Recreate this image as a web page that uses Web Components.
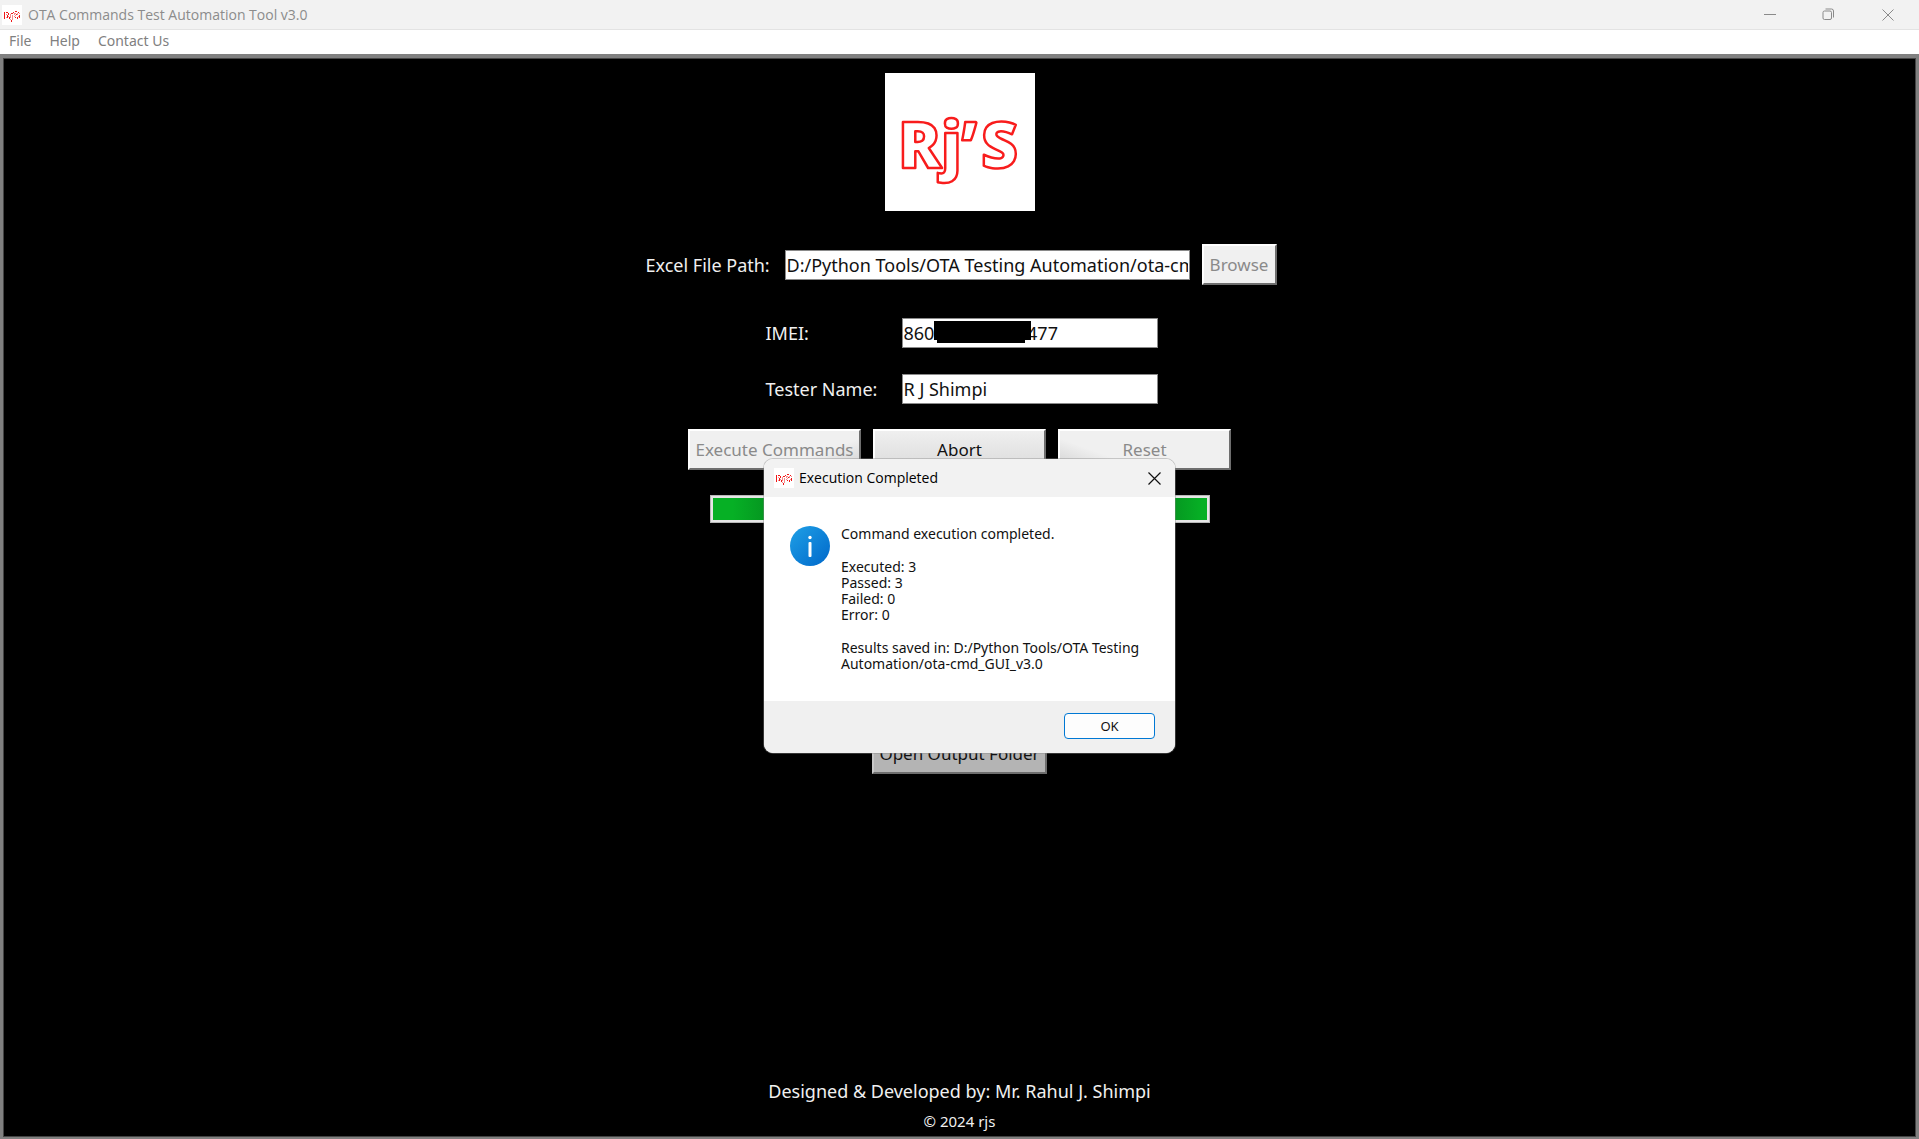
<!DOCTYPE html>
<html lang="en">
<head>
<meta charset="utf-8">
<title>OTA Commands Test Automation Tool v3.0</title>
<style>
html, body { height: 100%; margin: 0; }
body { font-family: "Noto Sans", "Open Sans", sans-serif; background: #000; overflow: hidden; }
</style>
</head>
<body>
<ota-app></ota-app>
<script>
const define = (name, html, init) => customElements.define(name, class extends HTMLElement {
  connectedCallback() {
    if (this.shadowRoot) return;
    const root = this.attachShadow({ mode: 'open' });
    root.innerHTML = html;
    if (init) init(this, root);
  }
});

define('rjs-icon', `
<style>:host{display:block;width:20px;height:20px;flex:none} svg{display:block}</style>
<svg width="20" height="20" viewBox="0 0 20 20" aria-hidden="true">
  <rect width="20" height="20" fill="#fff"/>
  <g fill="none" stroke-width="1" shape-rendering="crispEdges">
    <path stroke="#f01818" d="M2.500 7v7M4 7.500h2M6.500 8v2M5 10.500h1M5.500 11v2M7.500 12v2M9 8.500h2M9.500 15v2M11.500 7v1M13 6.500h2M14.500 9v1M16 7.500h1M15.500 12v2M17.500 10v3M13 12.500h1"/>
    <path stroke="#f78a8a" d="M4.500 9v1M4 12.500h1M6.500 11v1M8.500 9v4M8 14.500h1M10.500 10v5M12.500 8v2M13.500 8v1M15.500 8v2M16.500 11v1M13.500 10v1M17.500 8v1M12.500 11v1"/>
  </g>
</svg>`);

define('title-bar', `
<style>
:host{display:flex;align-items:center;height:29px;background:#f2f2f2;border-bottom:1px solid #e3e3e3;padding:0 2px;color:#8c8c8c;font:14px "Open Sans"}
span{flex:1;padding-left:6px;white-space:nowrap}
button{width:59px;height:29px;border:0;padding:0;background:none;color:#8a8a8a;display:grid;place-items:center}
svg{fill:none;stroke:currentColor}
</style>
<rjs-icon></rjs-icon><span><slot></slot></span>
<button aria-label="Minimize"><svg width="12" height="12"><path d="M0 5.500h12"/></svg></button>
<button aria-label="Restore"><svg width="13" height="13"><rect x="1" y="3" width="8.500" height="8.500" rx="1.500"/><path d="M3.500 1H9.500a2 2 0 0 1 2 2V9.500"/></svg></button>
<button aria-label="Close"><svg width="12" height="12"><path d="M.5.5l11 11M11.500.5l-11 11"/></svg></button>`);

define('menu-bar', `
<style>
:host{display:flex;align-items:flex-start;gap:18px;height:24px;padding-left:9px;background:#fff;font-size:14px;line-height:22px}
button{border:0;padding:0;background:none;font:inherit;color:#808080}
</style>
<button>File</button><button>Help</button><button>Contact Us</button>`);

define('rjs-logo', `
<style>:host{display:block;width:150px;height:138px;background:#fff} svg{display:block}
text{font:800 64px "Open Sans";fill:#fff;stroke:#f81c1c;stroke-width:2.500;stroke-linejoin:round}</style>
<svg width="150" height="138" viewBox="0 0 150 138" role="img">
  <text y="95"><tspan x="13">R</tspan><tspan x="56">j</tspan><tspan x="76">’</tspan><tspan x="96">S</tspan></text>
</svg>`);

define('tk-button', `
<style>
:host{display:block}
button{width:100%;height:41px;padding:0;border:2px solid;border-color:#fff #6e6e6e #6e6e6e #fff;outline:0;background:#f0f0f0;font:17px "Noto Sans";color:#111;white-space:nowrap}
button:disabled{color:#8a8a8a}
:host([shade=lower]) button{background:#b4b4b4;border-color:#a8a8a8 #6e6e6e #6e6e6e #c8c8c8}
:host([shade=left]) button{background:linear-gradient(160deg,#f0f0f0 70%,#d2d2d2)}
:host([shade=mid]) button{background:linear-gradient(#efefef,#dcdcdc)}
:host([shade=right]) button{background:linear-gradient(200deg,#f0f0f0 70%,#d2d2d2)}
</style>
<button><slot></slot></button>`, (el, root) => {
  root.querySelector('button').disabled = el.hasAttribute('disabled');
});

define('tk-field', `
<style>
:host{display:grid;align-items:center;color:#f0f0f0;font-size:18px;line-height:24px}
label{white-space:nowrap}
.box{position:relative;display:block}
input{box-sizing:border-box;display:block;width:100%;height:30px;margin:0;padding:0 1px;border:1px solid #8a8a8a;border-radius:0;background:#fff;color:#111;font:18px "Noto Sans"}
</style>
<label for="value"></label>
<div class="box"><input id="value" type="text"><slot></slot></div>`, (el, root) => {
  root.querySelector('label').textContent = el.getAttribute('label');
  root.querySelector('input').value = el.getAttribute('value');
  el.style.gridTemplateColumns = el.getAttribute('columns');
});

define('redaction-bar', `
<style>:host{position:absolute;left:32px;top:3px;width:97px;height:22px} svg{display:block}</style>
<svg width="97" height="22" aria-hidden="true"><path d="M0 0H97V19H91V22H3V19H0Z"/></svg>`);

define('green-progress', `
<style>
:host{display:block;width:500px}
div{box-sizing:border-box;height:28px;border:1px solid #b8b8b8;padding:2px;background:#e6e6e6}
i{display:block;height:100%;background:linear-gradient(90deg,#06b025,#06b025 4%,#058a1e 14%,#058a1e 90%,#06b025 99%)}
</style>
<div role="progressbar" aria-valuenow="100" aria-label="Execution progress"><i></i></div>`);

define('result-dialog', `
<style>
:host{position:absolute;left:764px;top:459px;width:411px}
dialog{position:static;display:block;width:auto;margin:0;padding:0;border:0;border-radius:9px;overflow:hidden;background:#fff;color:#111;box-shadow:0 0 0 1px #8886}
header{display:flex;align-items:center;height:38px;padding:0 12px 0 10px;background:#f2f2f2;font:14px "Open Sans";color:#000}
header span{flex:1;padding:0 0 2px 5px}
header button{width:18px;height:18px;border:0;padding:0;background:none;display:grid;place-items:center}
.body{box-sizing:border-box;display:flex;gap:11px;min-height:204px;padding:29px 24px 0 26px;font-size:14px}
.body svg{flex:none}
.text p{margin:0 0 17px;line-height:16px;white-space:nowrap}
footer{display:flex;justify-content:flex-end;padding:12px 20px 14px;background:#f0f0f0}
footer button{width:91px;height:26px;padding:0;border:1px solid #0078d4;border-radius:4px;background:#fdfdfd;font:13px "Noto Sans";color:#111}
</style>
<dialog open aria-labelledby="t">
<header><rjs-icon></rjs-icon><span id="t">Execution Completed</span>
<button aria-label="Close"><svg width="13" height="13" fill="none" stroke="#111" stroke-width="1.200"><path d="M.5.5l12 12M12.500.5l-12 12"/></svg></button></header>
<div class="body">
<svg width="40" height="40" aria-hidden="true"><defs><linearGradient id="g" x2="1" y2="1"><stop stop-color="#1fa0e6"/><stop offset="1" stop-color="#0068ca"/></linearGradient></defs><circle cx="20" cy="20" r="20" fill="url(#g)"/><circle cx="20" cy="11.500" r="1.700" fill="#fff"/><rect x="18.500" y="16" width="3" height="15" rx="1" fill="#fff"/></svg>
<div class="text"><p>Command execution completed.</p>
<p>Executed: 3<br>Passed: 3<br>Failed: 0<br>Error: 0</p>
<p>Results saved in: D:/Python Tools/OTA Testing<br>Automation/ota-cmd_GUI_v3.0</p></div>
</div>
<footer><button>OK</button></footer>
</dialog>`);

define('ota-app', `
<style>
:host{display:flex;flex-direction:column;height:100%;position:relative}
main{flex:1;display:flex;flex-direction:column;align-items:center;box-sizing:border-box;padding-top:15px;background:#000;border:solid #808080;border-width:4px 3px 2px 3px;box-shadow:inset 0 0 0 1px #444}
.path{display:flex;align-items:center;gap:12px;margin-top:33px;padding-left:3px}
.path tk-button{width:75px}
.narrow{display:flex;flex-direction:column;gap:26px;margin-top:33px;padding-left:4px}
.actions{display:flex;gap:12px;margin-top:25px}
.actions tk-button{width:173px}
green-progress{margin-top:25px}
.open{width:175px;margin-top:210px}
footer{margin-top:auto;text-align:center;color:#f0f0f0;font-size:18px;line-height:24px}
footer p{margin:0}
footer small{display:block;font-size:15px;line-height:20px;padding:8px 0 6px}
</style>
<title-bar>OTA Commands Test Automation Tool v3.0</title-bar>
<menu-bar></menu-bar>
<main>
<rjs-logo></rjs-logo>
<div class="path"><tk-field label="Excel File Path:" value="D:/Python Tools/OTA Testing Automation/ota-cmd_GUI_v3.0" columns="139px 405px"></tk-field><tk-button disabled>Browse</tk-button></div>
<div class="narrow">
<tk-field label="IMEI:" value="860&#8199;&#8199;&#8199;&#8199;&#8199;&#8199;&#8199;&#8199;&#8199;477" columns="136px 256px"><redaction-bar></redaction-bar></tk-field>
<tk-field label="Tester Name:" value="R J Shimpi" columns="136px 256px"></tk-field>
</div>
<div class="actions"><tk-button disabled shade="left">Execute Commands</tk-button><tk-button shade="mid">Abort</tk-button><tk-button disabled shade="right">Reset</tk-button></div>
<green-progress></green-progress>
<tk-button class="open" shade="lower">Open Output Folder</tk-button>
<footer><p>Designed &amp; Developed by: Mr. Rahul J. Shimpi</p><small>© 2024 rjs</small></footer>
</main>
<result-dialog></result-dialog>`);
</script>
</body>
</html>
